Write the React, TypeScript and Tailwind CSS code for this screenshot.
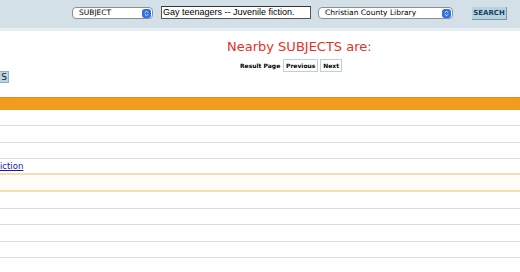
import { ChevronsUpDown } from 'lucide-react'

function Select({ label, width }: { label: string; width: string }) {
  return (
    <div className={`${width} h-[12px] flex items-center justify-between rounded-[4px] border border-[#8a8f94] bg-white pl-[6px] pr-[1px]`}>
      <span className="text-[7.5px] leading-none font-normal text-black">{label}</span>
      <span className="w-[9px] h-[9px] rounded-[3px] bg-[#2f6fdc] flex items-center justify-center">
        <ChevronsUpDown className="w-[7px] h-[7px] text-white" strokeWidth={3} />
      </span>
    </div>
  )
}

const rows = [
  { h: 'h-[16px]', line: 'border-b border-[#dcdcdc]' },
  { h: 'h-[17px]', line: 'border-b border-[#dcdcdc]' },
  { h: 'h-[16px]', line: 'border-b border-[#dcdcdc]' },
  { h: 'h-[16px]', line: 'border-b-2 border-[#f3dfb2]', link: 'iction' },
  { h: 'h-[17px]', line: 'border-b-2 border-[#f3dfb2]', current: true },
  { h: 'h-[17px]', line: 'border-b border-[#dcdcdc]' },
  { h: 'h-[16px]', line: 'border-b border-[#dcdcdc]' },
  { h: 'h-[17px]', line: 'border-b border-[#dcdcdc]' },
  { h: 'h-[16px]', line: 'border-b border-[#dcdcdc]' },
]

export default function App() {
  return (
    <div className="w-[520px] h-[272px] overflow-hidden bg-white" style={{ fontFamily: '"DejaVu Sans", Verdana, sans-serif' }}>
      <div className="h-[28px] bg-[#d3e0e7] flex items-start pt-[7px] pl-[72px]">
        <Select label="SUBJECT" width="w-[81px]" />
        <div className="ml-[8px] w-[150px] h-[13px] border border-[#555] border-t-[#333] bg-white flex items-center pl-[1px] -mt-[1px]">
          <span className="text-[9px] leading-none text-black" style={{ fontFamily: '"Liberation Sans", Arial, sans-serif' }}>
            Gay teenagers -- Juvenile fiction.
          </span>
        </div>
        <div className="ml-[7px]">
          <Select label="Christian County Library" width="w-[135px]" />
        </div>
        <button className="ml-[19px] w-[35px] h-[13px] bg-[#b8d3e0] border-r border-b border-[#7c95a4] text-[7px] leading-none font-semibold text-[#1c3d5e]">
          SEARCH
        </button>
      </div>
      <div className="h-[3px] bg-[#e6eef2]" />

      <div className="pt-[8px] pl-[227px] text-[13px] leading-[16px] text-[#e8302a]">Nearby SUBJECTS are:</div>

      <div className="mt-[4px] flex items-center pl-[240px]">
        <span className="text-[6px] font-bold text-black">Result Page</span>
        <button className="ml-[3px] h-[13px] w-[35px] border border-[#b9d2de] bg-white text-[6px] font-bold text-black">Previous</button>
        <button className="ml-[2px] h-[13px] w-[22px] border border-[#b9d2de] bg-white text-[6px] font-bold text-black">Next</button>
      </div>

      <div className="mt-[-1px]">
        <button className="h-[12px] w-[9px] flex items-center justify-end pr-[1px] bg-[#bcd6e2] border border-l-0 border-[#8fb0c0] text-[9px] leading-none text-[#1a1a1a]">
          S
        </button>
      </div>

      <div className="mt-[14px] h-[13px] bg-[#f29b1f] border-t border-[#e88e12]" />

      <div>
        {rows.map((r, i) => (
          <div key={i} className={`${r.h} ${r.line} box-border flex items-end ${r.current ? 'bg-[#fffdf8]' : ''}`}>
            {r.link && (
              <a href="#" className="text-[8.5px] leading-[13px] text-[#1a1aa6] underline">
                {r.link}
              </a>
            )}
          </div>
        ))}
      </div>
    </div>
  )
}
